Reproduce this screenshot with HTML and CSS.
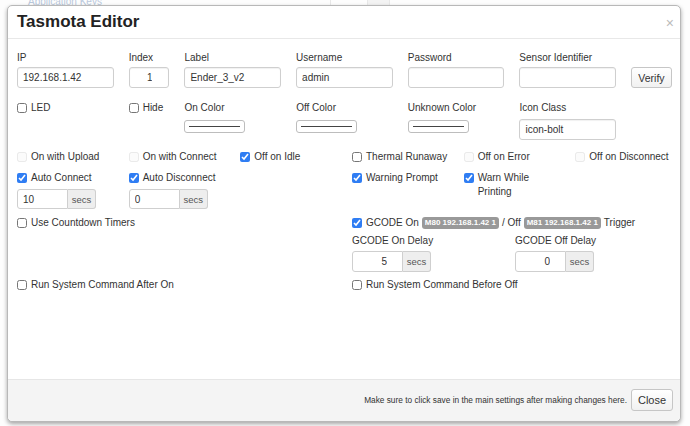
FILE: index.html
```html
<!DOCTYPE html>
<html>
<head>
<meta charset="utf-8">
<link rel="stylesheet" href="styles.css">
</head>
<body>
<div class="page">
  <div class="page-bar">
    <a class="page-link">Application Keys</a>
    <span class="page-cell c-a"></span>
    <span class="page-cell c-b"></span>
    <span class="page-cell c-c"></span>
  </div>
</div>

<div class="modal">
  <div class="modal-header">
    <h4 class="modal-title">Tasmota Editor</h4>
    <span class="close">×</span>
  </div>
  <div class="modal-body">
    <div class="row r1">
      <div class="c2"><label class="lbl">IP</label><input class="form-control" value="192.168.1.42"></div>
      <div class="c1"><label class="lbl">Index</label><input class="form-control num" value="1"></div>
      <div class="c2"><label class="lbl">Label</label><input class="form-control" value="Ender_3_v2"></div>
      <div class="c2"><label class="lbl">Username</label><input class="form-control" value="admin"></div>
      <div class="c2"><label class="lbl">Password</label><input class="form-control" type="password" value=""></div>
      <div class="c2"><label class="lbl">Sensor Identifier</label><input class="form-control" value=""></div>
      <div class="c1"><button class="btn">Verify</button></div>
    </div>

    <div class="row r2">
      <div class="c2"><label class="chk"><input type="checkbox">LED</label></div>
      <div class="c1"><label class="chk"><input type="checkbox">Hide</label></div>
      <div class="c2"><label class="lbl">On Color</label><span class="swatch"><span class="swatch-line"></span></span></div>
      <div class="c2"><label class="lbl">Off Color</label><span class="swatch"><span class="swatch-line"></span></span></div>
      <div class="c2"><label class="lbl">Unknown Color</label><span class="swatch"><span class="swatch-line"></span></span></div>
      <div class="c2"><label class="lbl">Icon Class</label><input class="form-control icon-input" value="icon-bolt"></div>
    </div>

    <div class="row r3">
      <div class="c2"><label class="chk dis"><input type="checkbox" disabled>On with Upload</label></div>
      <div class="c2"><label class="chk dis"><input type="checkbox" disabled>On with Connect</label></div>
      <div class="c2"><label class="chk"><input type="checkbox" checked>Off on Idle</label></div>
      <div class="c2"><label class="chk"><input type="checkbox">Thermal Runaway</label></div>
      <div class="c2"><label class="chk dis"><input type="checkbox" disabled>Off on Error</label></div>
      <div class="c2"><label class="chk dis"><input type="checkbox" disabled>Off on Disconnect</label></div>
    </div>

    <div class="row r4">
      <div class="c2">
        <label class="chk"><input type="checkbox" checked>Auto Connect</label>
        <div class="input-group"><input class="ig-input" value="10"><span class="ig-addon">secs</span></div>
      </div>
      <div class="c2">
        <label class="chk"><input type="checkbox" checked>Auto Disconnect</label>
        <div class="input-group"><input class="ig-input" value="0"><span class="ig-addon">secs</span></div>
      </div>
      <div class="c2"></div>
      <div class="c2"><label class="chk"><input type="checkbox" checked>Warning Prompt</label></div>
      <div class="c2"><label class="chk top"><input type="checkbox" checked>Warn While Printing</label></div>
    </div>

    <div class="row r5">
      <div class="c6"><label class="chk"><input type="checkbox">Use Countdown Timers</label></div>
      <div class="c6">
        <label class="chk"><input type="checkbox" checked>GCODE On <span class="badge">M80 192.168.1.42 1</span> / Off <span class="badge">M81 192.168.1.42 1</span> Trigger</label>
        <div class="sub">
          <div>
            <label class="lbl">GCODE On Delay</label>
            <div class="input-group tall"><input class="ig-input num" value="5"><span class="ig-addon">secs</span></div>
          </div>
          <div>
            <label class="lbl">GCODE Off Delay</label>
            <div class="input-group tall"><input class="ig-input num" value="0"><span class="ig-addon">secs</span></div>
          </div>
        </div>
      </div>
    </div>

    <div class="row r6">
      <div class="c6"><label class="chk"><input type="checkbox">Run System Command After On</label></div>
      <div class="c6"><label class="chk"><input type="checkbox">Run System Command Before Off</label></div>
    </div>
  </div>
  <div class="modal-footer">
    <span class="note">Make sure to click save in the main settings after making changes here.</span>
    <button class="btn btn-close">Close</button>
  </div>
</div>
</body>
</html>
```

FILE: styles.css
```css
* { box-sizing: border-box; }

body {
  margin: 0;
  font-family: "Liberation Sans", Arial, sans-serif;
  font-size: 10px;
  color: #333;
  background: #fff;
}

.page {
  height: 426px;
  overflow: hidden;
  background: #fdfdfd;
}

.page-bar {
  display: flex;
  align-items: flex-start;
  height: 20px;
  margin-top: -4px;
}

.page-link {
  color: #b9c8dc;
  font-size: 10px;
  line-height: 12px;
  margin-left: 28px;
  width: 302px;
}

.page-cell {
  height: 20px;
  border-left: 1px solid #e8e8e8;
}
.c-a { width: 37px; }
.c-b { width: 22px; background: #f3f3f3; }
.c-c { width: 1px; }

.modal {
  position: absolute;
  left: 7px;
  top: 5px;
  width: 674px;
  height: 417px;
  background: #fff;
  border: 1px solid #b8b8b8;
  border-radius: 5px;
  box-shadow: 0 2px 4px rgba(0, 0, 0, 0.35);
  display: flex;
  flex-direction: column;
}

.modal-header {
  height: 33px;
  flex: none;
  display: flex;
  align-items: center;
  justify-content: space-between;
  padding: 0 6px 0 9px;
  border-bottom: 1px solid #e8e8e8;
}

.modal-title {
  margin: 0;
  font-size: 17px;
  font-weight: bold;
  color: #222;
}

.close {
  color: #bbb;
  font-size: 14px;
  line-height: 14px;
  margin-top: 2px;
}

.modal-body {
  flex: 1;
  padding: 12px 8px 0 9px;
}

.row {
  display: grid;
  grid-template-columns: repeat(12, 1fr);
  column-gap: 15px;
}

.c1 { grid-column: span 1; }
.c2 { grid-column: span 2; }
.c6 { grid-column: span 6; }

.r1 { align-items: end; }
.r2 { margin-top: 13px; }
.r3 { margin-top: 10px; }
.r4 { margin-top: 7px; }
.r5 { margin-top: 7px; }
.r6 { margin-top: 6px; }

.lbl {
  display: block;
  line-height: 14px;
  margin-bottom: 2px;
  white-space: nowrap;
}

.form-control {
  display: block;
  width: 100%;
  height: 21px;
  margin: 0;
  border: 1px solid #cfcfcf;
  border-radius: 3px;
  padding: 0 5px;
  font: inherit;
  font-size: 10px;
  color: #333;
  background: #fff;
  box-shadow: inset 0 1px 1px rgba(0, 0, 0, 0.06);
}

.num { text-align: right; padding-right: 16px; }

.icon-input { margin-top: 4px; }
.r2 .lbl { margin-bottom: 0; }

.btn {
  display: block;
  height: 21px;
  width: 41px;
  margin: 0;
  padding: 0;
  border: 1px solid #c6c6c6;
  border-radius: 3px;
  background: linear-gradient(#ffffff, #f1f1f1);
  font-family: inherit;
  font-size: 10.5px;
  color: #333;
}

.chk {
  display: flex;
  align-items: center;
  gap: 4px;
  line-height: 14px;
  white-space: nowrap;
}

.chk.top {
  align-items: flex-start;
  white-space: normal;
}
.chk.top input { margin-top: 2px; }

.chk input {
  width: 10px;
  height: 10px;
  margin: 0;
  flex: none;
  accent-color: #2f7df3;
}

.chk.dis input { opacity: 0.45; }

.swatch {
  display: flex;
  align-items: center;
  width: 61px;
  height: 13px;
  margin-top: 5px;
  padding: 0 4px;
  border: 1px solid #bdbdbd;
  border-radius: 3px;
  background: #fff;
}

.swatch-line {
  flex: 1;
  height: 1px;
  background: #444;
}

.input-group {
  display: flex;
  width: 79px;
  height: 20px;
  margin-top: 4px;
}

.input-group.tall { height: 21px; margin-top: 0; }

.ig-input {
  width: 51px;
  height: 100%;
  margin: 0;
  padding: 0 5px;
  border: 1px solid #cfcfcf;
  border-radius: 3px 0 0 3px;
  font: inherit;
  font-size: 10px;
  color: #333;
  background: #fff;
}

.ig-input.num { padding-right: 15px; }

.ig-addon {
  width: 28px;
  display: flex;
  align-items: center;
  justify-content: center;
  border: 1px solid #cfcfcf;
  border-left: none;
  border-radius: 0 3px 3px 0;
  background: #eee;
  color: #555;
  font-size: 9.5px;
}

.badge {
  display: inline-block;
  background: #999;
  color: #fff;
  font-weight: bold;
  font-size: 8px;
  line-height: 12px;
  padding: 0 3px;
  border-radius: 3px;
  margin: 0 -1px;
}

.sub {
  display: grid;
  grid-template-columns: 158px 158px;
  column-gap: 5px;
  margin-top: 4px;
}

.sub .lbl { margin-bottom: 3px; }

.modal-footer {
  height: 42px;
  flex: none;
  display: flex;
  align-items: center;
  justify-content: flex-end;
  gap: 4px;
  padding: 0 7px 1px 0;
  border-top: 1px solid #e6e6e6;
  background: #f4f4f4;
  border-radius: 0 0 5px 5px;
}

.note {
  font-size: 8.3px;
  color: #333;
}

.btn-close {
  width: 42px;
  height: 22px;
  font-size: 11px;
}
```
